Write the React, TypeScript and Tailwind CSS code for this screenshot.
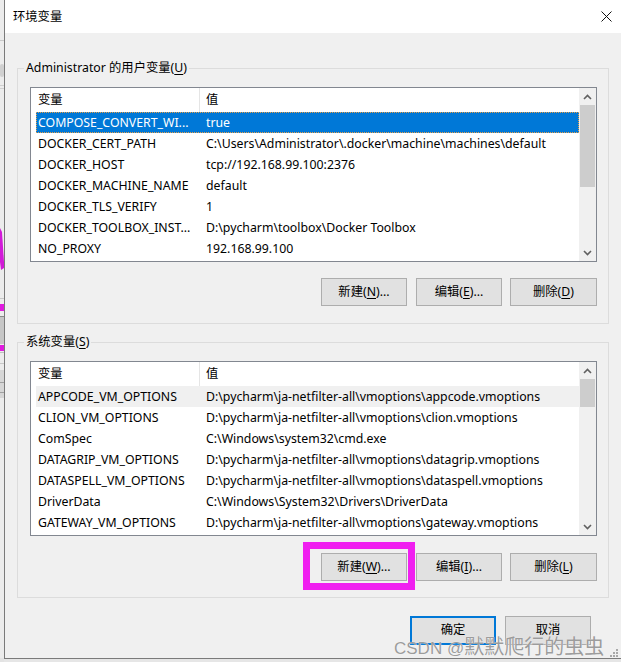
import React from "react";

type Row = { name: string; value: string };

const userVars: Row[] = [
  { name: "COMPOSE_CONVERT_WI...", value: "true" },
  { name: "DOCKER_CERT_PATH", value: "C:\\Users\\Administrator\\.docker\\machine\\machines\\default" },
  { name: "DOCKER_HOST", value: "tcp://192.168.99.100:2376" },
  { name: "DOCKER_MACHINE_NAME", value: "default" },
  { name: "DOCKER_TLS_VERIFY", value: "1" },
  { name: "DOCKER_TOOLBOX_INST...", value: "D:\\pycharm\\toolbox\\Docker Toolbox" },
  { name: "NO_PROXY", value: "192.168.99.100" },
];

const systemVars: Row[] = [
  { name: "APPCODE_VM_OPTIONS", value: "D:\\pycharm\\ja-netfilter-all\\vmoptions\\appcode.vmoptions" },
  { name: "CLION_VM_OPTIONS", value: "D:\\pycharm\\ja-netfilter-all\\vmoptions\\clion.vmoptions" },
  { name: "ComSpec", value: "C:\\Windows\\system32\\cmd.exe" },
  { name: "DATAGRIP_VM_OPTIONS", value: "D:\\pycharm\\ja-netfilter-all\\vmoptions\\datagrip.vmoptions" },
  { name: "DATASPELL_VM_OPTIONS", value: "D:\\pycharm\\ja-netfilter-all\\vmoptions\\dataspell.vmoptions" },
  { name: "DriverData", value: "C:\\Windows\\System32\\Drivers\\DriverData" },
  { name: "GATEWAY_VM_OPTIONS", value: "D:\\pycharm\\ja-netfilter-all\\vmoptions\\gateway.vmoptions" },
];

const Chevron = ({ up }: { up?: boolean }) => (
  <svg width="9" height="6" viewBox="0 0 9 6">
    <polyline
      points={up ? "1,5 4.5,1.5 8,5" : "1,1 4.5,4.5 8,1"}
      fill="none"
      stroke="#606060"
      strokeWidth="1.6"
    />
  </svg>
);

const ScrollBar = ({ thumb }: { thumb: number }) => (
  <div className="w-[17px] bg-[#f0f0f0] flex flex-col">
    <div className="h-[17px] flex items-center justify-center">
      <Chevron up />
    </div>
    <div className="mx-[1px] bg-[#cdcdcd]" style={{ height: thumb }} />
    <div className="flex-1" />
    <div className="h-[17px] flex items-center justify-center">
      <Chevron />
    </div>
  </div>
);

const VarList = ({
  rows,
  thumb,
  selected,
}: {
  rows: Row[];
  thumb: number;
  selected: "focus" | "soft";
}) => (
  <div className="h-[175px] border border-[#828790] bg-white flex">
    <div className="flex-1 min-w-0 flex flex-col">
      <div className="h-[24px] flex">
        <div className="w-[169px] pl-[7px] pt-[1px] border-r border-[#e5e5e5] flex items-center">变量</div>
        <div className="pl-[6px] pt-[1px] flex items-center">值</div>
      </div>
      <div className="pl-[5px]">
        {rows.map((r, i) => {
          const sel = i === 0;
          const cls =
            sel && selected === "focus"
              ? "bg-[#0078d7] text-white outline-1 outline-dotted outline-[#e6a04a] -outline-offset-1"
              : sel
              ? "bg-[#f0f0f0]"
              : "";
          return (
            <div key={r.name} className={"h-[21px] pt-[1px] flex items-center whitespace-nowrap " + cls}>
              <div className="w-[163px] pl-[2px] pr-[5px] overflow-hidden">{r.name}</div>
              <div className="pl-[7px]">{r.value}</div>
            </div>
          );
        })}
      </div>
    </div>
    <ScrollBar thumb={thumb} />
  </div>
);

const Btn = ({
  label,
  mn,
  tail,
  className = "",
}: {
  label: string;
  mn?: string;
  tail?: string;
  className?: string;
}) => (
  <button
    className={
      "w-[86px] h-[28px] bg-[#e1e1e1] border border-[#adadad] flex items-center justify-center text-black " +
      className
    }
  >
    {label}
    {mn && (
      <>
        (<span className="underline underline-offset-2">{mn}</span>)
      </>
    )}
    {tail}
  </button>
);

const Group = ({
  title,
  mn,
  children,
  className = "",
}: {
  title: string;
  mn: string;
  children: React.ReactNode;
  className?: string;
}) => (
  <fieldset className={"ml-[12px] w-[592px] border border-[#dcdcdc] " + className}>
    <legend className="ml-[6px] px-[2px] leading-[16px]">
      {title}(<span className="underline underline-offset-2">{mn}</span>)
    </legend>
    <div className="pl-[12px] pr-[11px]">{children}</div>
  </fieldset>
);

const BackStrip = () => (
  <svg width="4" height="662" className="shrink-0 block">
    <rect x="0" y="0" width="4" height="662" fill="#ececec" />
    <rect x="0" y="40" width="4" height="1" fill="#c9c9c9" />
    <rect x="0" y="64" width="4" height="13" rx="2" fill="#d0d0d0" />
    <rect x="0" y="85" width="4" height="1" fill="#cfcfcf" />
    <rect x="0" y="88" width="4" height="1" fill="#cfcfcf" />
    <polygon points="0,228 2,232 4,262 4,268 1,270 0,262" fill="#d21ad8" />
    <rect x="0" y="298" width="4" height="1" fill="#c8c8c8" />
    <rect x="0" y="304" width="4" height="7" fill="#e11be0" />
    <rect x="0" y="316" width="4" height="1" fill="#8a8a8a" />
    <rect x="0" y="317" width="4" height="27" fill="#c6c6c6" />
    <rect x="0" y="345" width="4" height="6" fill="#e11be0" />
    <rect x="0" y="352" width="4" height="1" fill="#c0c0c0" />
    <rect x="0" y="363" width="4" height="1" fill="#c8c8c8" />
    <rect x="0" y="370" width="4" height="28" fill="#d6d6d6" />
    <rect x="0" y="382" width="4" height="1" fill="#a0a0a0" />
    <rect x="0" y="392" width="4" height="1" fill="#a0a0a0" />
    <rect x="0" y="658" width="4" height="4" fill="#e3e3e3" />
  </svg>
);

export default function App() {
  return (
    <div className="relative w-[621px] h-[662px] overflow-hidden bg-[#e6e6e6] flex items-start font-['Noto_Sans','Noto_Sans_CJK_SC',sans-serif] text-[12.3px] text-black">
      <BackStrip />
      <div className="w-[625px] h-[659px] shrink-0 bg-[#f0f0f0] border-l border-b border-[#7a7a7a] flex flex-col">
        {/* title bar */}
        <div className="h-[33px] bg-white flex items-center justify-between">
          <span className="pl-[8px] pt-[1px]">环境变量</span>
          <div className="w-[46px] h-full flex items-center justify-center">
            <svg width="11" height="11" viewBox="0 0 11 11">
              <path d="M0.5 0.5 L10.5 10.5 M10.5 0.5 L0.5 10.5" stroke="#111" strokeWidth="1" />
            </svg>
          </div>
        </div>

        <Group title="Administrator 的用户变量" mn="U" className="mt-[27px] pt-[11px] pb-[17px]">
          <VarList rows={userVars} thumb={82} selected="focus" />
          <div className="mt-[16px] flex justify-end">
            <Btn label="新建" mn="N" tail="..." />
            <Btn label="编辑" mn="E" tail="..." className="ml-[9px]" />
            <Btn label="删除" mn="D" className="ml-[8px] w-[87px]" />
          </div>
        </Group>

        <Group title="系统变量" mn="S" className="mt-[10px] pt-[11px] pb-[16px]">
          <VarList rows={systemVars} thumb={28} selected="soft" />
          <div className="mt-[17px] flex justify-end">
            <Btn label="新建" mn="W" tail="..." />
            <Btn label="编辑" mn="I" tail="..." className="ml-[9px]" />
            <Btn label="删除" mn="L" className="ml-[8px] w-[87px]" />
          </div>
        </Group>

        <div className="ml-[12px] w-[592px] mt-[18px] pr-[18px] flex justify-end">
          <button className="w-[86px] h-[29px] bg-[#e1e1e1] border-2 border-[#0078d7] flex items-center justify-center">
            确定
          </button>
          <button className="ml-[9px] w-[86px] h-[29px] bg-[#e1e1e1] border border-[#adadad] flex items-center justify-center">
            取消
          </button>
        </div>
      </div>

      {/* annotation box drawn over the screenshot */}
      <div className="absolute left-[303px] top-[542px] w-[112px] h-[48px] border-[7px] border-[#f01ff0]" />

      {/* watermark */}
      <div className="absolute left-[394px] top-[631px] whitespace-nowrap text-[#9c9c9c] [text-shadow:0_0_1px_#ffffff] pointer-events-none">
        <span className="font-['Liberation_Sans',sans-serif] text-[17px]">CSDN @</span>
        <span className="font-['Noto_Sans_CJK_SC',sans-serif] text-[20px]">默默爬行的虫虫</span>
      </div>

      {/* resize grip */}
      <svg className="absolute left-[609px] top-[648px]" width="10" height="10" viewBox="0 0 10 10">
        <rect x="7" y="1" width="2" height="2" fill="#a8a8a8" />
        <rect x="4" y="4" width="2" height="2" fill="#a8a8a8" />
        <rect x="7" y="4" width="2" height="2" fill="#a8a8a8" />
        <rect x="1" y="7" width="2" height="2" fill="#a8a8a8" />
        <rect x="4" y="7" width="2" height="2" fill="#a8a8a8" />
        <rect x="7" y="7" width="2" height="2" fill="#a8a8a8" />
      </svg>
    </div>
  );
}
